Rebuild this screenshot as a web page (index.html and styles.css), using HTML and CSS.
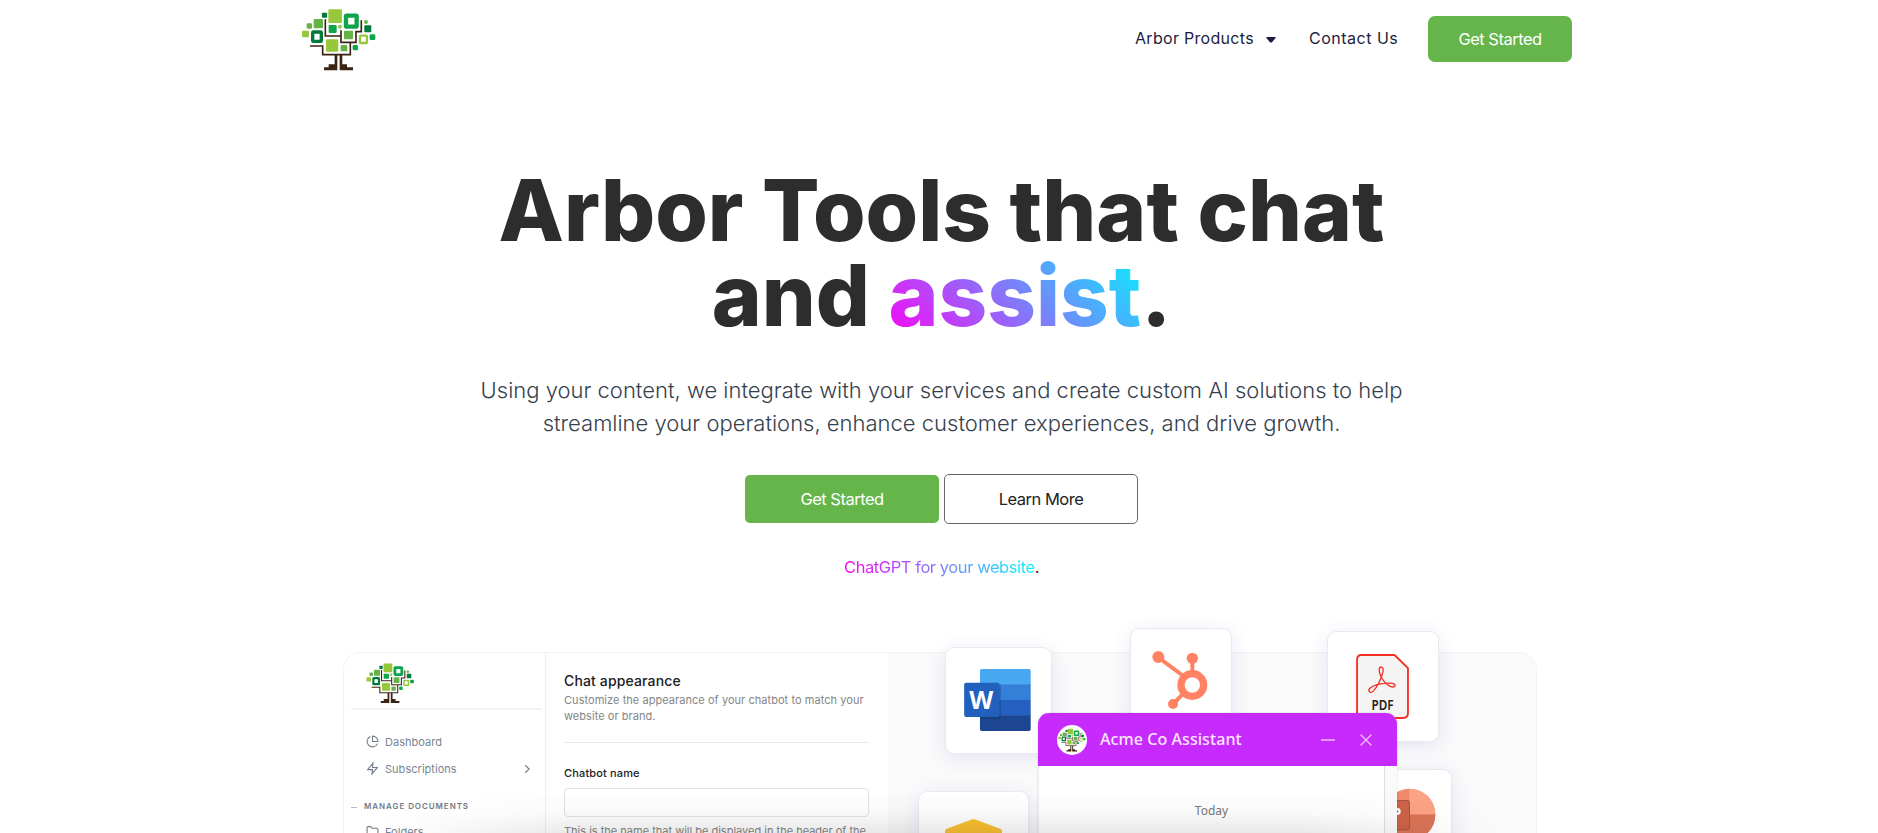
FILE: index.html
```html
<!DOCTYPE html>
<html lang="en">
<head>
<meta charset="utf-8">
<title>Arbor Tools</title>
<link rel="stylesheet" href="styles.css">
</head>
<body>
<svg class="defs" aria-hidden="true">
  <symbol id="tree" viewBox="30 20 235 195">
    <g fill="none" stroke="#3c2415" stroke-width="5">
      <path d="M106 57V107H151M153 90V126H198V94H214V60M60 137H98V163H181V126"/>
    </g>
    <path fill="#3c2415" d="M134 164h8v46h-40v-9h14v-9h18zM149 164h8v28h14v9h18v9h-40z"/>
    <g fill="#97c83c"><rect x="115" y="27" width="41" height="41" rx="4"/><rect x="108" y="117" width="37" height="37" rx="4"/><rect x="36" y="91" width="21" height="20" rx="3"/><circle cx="150" cy="79" r="6"/></g>
    <g fill="#65b346"><rect x="71" y="56" width="28" height="28" rx="3"/><rect x="162" y="91" width="27" height="26" rx="3"/><rect x="50" y="69" width="16" height="16" rx="3"/><rect x="152" y="134" width="20" height="19" rx="3"/><circle cx="228" cy="65" r="6"/></g>
    <g fill="#0da44c"><rect x="116" y="74" width="24" height="24" rx="3"/><rect x="239" y="102" width="17" height="17" rx="4"/><rect x="188" y="134" width="16" height="16" rx="4"/></g>
    <g fill="#007a3a"><rect x="96" y="37" width="15" height="15" rx="2"/><rect x="223" y="75" width="21" height="21" rx="3"/></g>
    <rect x="168" y="46" width="32" height="33" rx="2" fill="#fff" stroke="#0da44c" stroke-width="13"/>
    <rect x="68" y="95" width="26" height="28" rx="2" fill="#fff" stroke="#007a3a" stroke-width="10"/>
    <rect x="210" y="106" width="21" height="22" rx="2" fill="#fff" stroke="#97c83c" stroke-width="7"/>
  </symbol>
</svg>

<header class="header">
  <svg class="logo"><use href="#tree"/></svg>
  <nav class="nav">
    <a class="nav-products">Arbor Products</a>
    <svg class="caret" viewBox="0 0 10 6"><path d="M1 0h8q1.400 0 .6 1L6 5.300q-1 .9-2 0L.4 1Q-.4 0 1 0z" fill="#1c1d40"/></svg>
    <a class="nav-contact">Contact Us</a>
    <a class="btn btn-nav">Get Started</a>
  </nav>
</header>

<main class="hero">
  <h1>Arbor Tools that chat<br>and <span class="grad">assist</span>.</h1>
  <p class="lead">Using your content, we integrate with your services and create custom AI solutions to help<br>streamline your operations, enhance customer experiences, and drive growth.</p>
  <div class="actions">
    <a class="btn btn-main">Get Started</a>
    <a class="btn btn-outline">Learn More</a>
  </div>
  <p class="tagline"><span class="grad-flat">ChatGPT for your website</span>.</p>
</main>

<section class="preview">
  <aside class="sidebar">
    <div class="side-head"><svg class="side-logo"><use href="#tree"/></svg></div>
    <div class="item">
      <svg viewBox="0 0 24 24"><path d="M21.200 15.900A10 10 0 1 1 8 2.800M22 12A10 10 0 0 0 12 2v10z"/></svg>
      <span>Dashboard</span>
    </div>
    <div class="item">
      <svg viewBox="0 0 24 24"><path d="M13 2L3 14h9l-1 8 10-12h-9z"/></svg>
      <span>Subscriptions</span>
      <svg class="chev" viewBox="0 0 24 24"><path d="M8 21l9-9-9-9"/></svg>
    </div>
    <div class="group"><i></i><span>MANAGE DOCUMENTS</span></div>
    <div class="item folders">
      <svg viewBox="0 0 24 24"><path d="M22 19a2 2 0 0 1-2 2H4a2 2 0 0 1-2-2V5a2 2 0 0 1 2-2h5l2 3h9a2 2 0 0 1 2 2z"/></svg>
      <span>Folders</span>
    </div>
  </aside>
  <div class="settings">
    <h2>Chat appearance</h2>
    <p class="desc">Customize the appearance of your chatbot to match your<br>website or brand.</p>
    <hr>
    <h3>Chatbot name</h3>
    <div class="field"></div>
    <p class="help">This is the name that will be displayed in the header of the</p>
  </div>
  <div class="stage">
    <div class="tile word">
      <svg viewBox="0 0 200 186">
        <clipPath id="wc"><rect x="47" width="153" height="186" rx="6"/></clipPath>
        <g clip-path="url(#wc)"><path fill="#48a8f1" d="M47 0h153v47H47z"/><path fill="#3480d8" d="M47 46h153v47H47z"/><path fill="#245fc2" d="M47 93h153v47H47z"/><path fill="#1c4592" d="M47 139h153v47H47z"/><rect x="20" y="45" width="90" height="104" rx="6" fill="#123" opacity=".25"/></g>
        <rect y="41" width="106" height="103" rx="6" fill="#2160bd"/>
        <text x="51" y="119" text-anchor="middle" textLength="72" lengthAdjust="spacingAndGlyphs" class="w-letter">W</text>
      </svg>
    </div>
    <div class="tile hub">
      <svg viewBox="0 0 168 176">
        <g stroke="#ff8362" fill="none"><circle cx="121" cy="102" r="34" stroke-width="22"/><path stroke-width="12" d="M20 20l74 55M121 24v42M64 159l30-32"/></g>
        <g fill="#ff8362"><circle cx="19" cy="18" r="18"/><circle cx="121" cy="22" r="17"/><circle cx="63" cy="159" r="15"/></g>
      </svg>
    </div>
    <div class="tile pdf">
      <svg viewBox="0 0 158 194">
        <path d="M16 3h99l40 39v134q0 15-15 15H16Q3 191 3 176V18Q3 3 16 3z" fill="#f4f4f5" stroke="#f52f22" stroke-width="5.500"/>
        <path d="M76 39c-10-2-8 18 0 32 10 17 26 30 36 27 10-4 4-12-18-11-20 1-41 6-51 14-10 9-1 20 9 9C64 98 76 72 80 55q3-15-4-16z" fill="none" stroke="#f52f22" stroke-width="4"/>
        <text x="79" y="166" text-anchor="middle" textLength="66" lengthAdjust="spacingAndGlyphs" class="pdf-text">PDF</text>
      </svg>
    </div>
    <div class="tile yellow"><svg viewBox="0 0 172 60"><path d="M0 60V36q0-4 4-6L78 2q8-4 16 0l74 28q4 2 4 6v24z" fill="#fbc132"/></svg></div>
    <div class="tile ppt">
      <svg viewBox="0 0 160 160"><circle cx="80" cy="80" r="78" fill="#ef8a6c"/><path fill="#fca385" d="M80 2a78 78 0 0 1 78 78H80z"/><path fill="#d97457" d="M158 80a78 78 0 0 1-156 0z"/><rect x="-10" y="38" width="90" height="88" rx="6" fill="#cd6447" stroke="#9f5442" stroke-width="3"/><circle cx="43" cy="71" r="7" fill="none" stroke="#fff" stroke-width="7"/></svg>
    </div>
    <div class="chat">
      <div class="chat-head">
        <span class="avatar"><svg><use href="#tree"/></svg></span>
        <span class="chat-title">Acme Co Assistant</span>
        <svg class="min" viewBox="0 0 14 14"><path d="M0 7h14"/></svg>
        <svg class="close" viewBox="0 0 14 14"><path d="M1.500 1.500l11 11M12.500 1.500l-11 11"/></svg>
      </div>
      <div class="chat-body"><div class="messages"><span>Today</span></div><div class="scroll"></div></div>
    </div>
  </div>
  <div class="fade"></div>
</section>
</body>
</html>
```
FILE: styles.css
```css
* { box-sizing: border-box; }
html { overflow: hidden; }
body { position: relative; margin: 0; height: 833px; overflow: hidden; background: #fff; font-family: Inter, sans-serif; color: #2d2d2d; }
h1, h2, h3, p { margin: 0; }
.defs { position: absolute; width: 0; height: 0; }
.header { height: 78px; padding: 0 306px 0 300px; display: flex; justify-content: space-between; }
.logo { width: 78.300px; height: 65px; margin-top: 6.700px; }
.nav { display: flex; align-items: center; height: 78px; color: #1c1d40; font-size: 16px; white-space: nowrap; }
.nav-products { width: 118px; letter-spacing: .3px; margin-top: -2px; }
.caret { width: 10px; height: 6px; margin: 1px 33px 0 13px; }
.nav-contact { width: 89px; margin: -2px 30px 0 0; letter-spacing: .5px; }
.btn { display: flex; align-items: center; justify-content: center; font-size: 16.500px; letter-spacing: -.5px; white-space: nowrap; }
.btn-nav { width: 144px; height: 46px; border-radius: 7px; background: #66b54a; color: #fff; }
.hero { display: flex; flex-direction: column; align-items: center; text-align: center; padding-left: 5px; }
h1 { margin-top: 90px; font-size: 85px; line-height: 85px; font-weight: 800; white-space: nowrap; }
.grad { background: linear-gradient(45deg, #ff00f5, #00f7ff); background-clip: text; color: transparent; }
.lead { margin-top: 36px; font-size: 22px; line-height: 33px; font-weight: 300; color: #36414e; white-space: nowrap; }
.actions { display: flex; align-items: center; gap: 5px; margin-top: 34px; height: 50px; }
.btn-main { width: 194px; height: 48px; border-radius: 5px; background: #66b54a; color: #fff; }
.btn-outline { width: 194px; height: 50px; border-radius: 5px; border: 1px solid #666; color: #222; }
.tagline { margin-top: 31px; font-size: 16.500px; line-height: 24px; letter-spacing: -.43px; }
.grad-flat { background: linear-gradient(90deg, #ff00f5, #00f7ff); background-clip: text; color: transparent; }

.preview { position: absolute; left: 343px; top: 652px; width: 1194px; height: 181px; display: flex; border: 1px solid #f3f3f3; border-bottom: 0; border-radius: 18px 18px 0 0; }
.sidebar { width: 202px; height: 180px; overflow: hidden; border-right: 1px solid #eee; padding-left: 7px; }
.side-head { width: 191px; height: 57px; border-bottom: 2px solid #f3f3f3; padding: 9px 0 0 14px; }
.side-logo { width: 51px; height: 42px; }
.item { height: 27px; display: flex; align-items: center; gap: 6px; padding-left: 15px; font-size: 11px; letter-spacing: .03px; color: #7a8491; }
.side-head + .item { margin-top: 18px; }
.item svg { width: 13px; height: 13px; fill: none; stroke: #6f7a87; stroke-width: 2; }
.item .chev { width: 10px; height: 10px; margin-left: auto; margin-right: 13px; stroke-width: 2.600; }
.group { display: flex; align-items: center; height: 15px; margin-top: 16px; font-size: 8px; font-weight: 600; color: #737c87; letter-spacing: .93px; }
.group i { width: 6px; height: 1px; background: #bbb; margin: 3px 7px 0 0; }
.folders { margin-top: 5px; }
.settings { width: 342px; height: 180px; padding: 19px 0 0 18px; color: #202124; white-space: nowrap; overflow: hidden; }
.settings h2 { font-size: 14px; line-height: 18px; font-weight: 500; letter-spacing: .14px; }
.desc { margin-top: 2px; font-size: 11px; line-height: 16px; letter-spacing: .05px; color: #858585; }
hr { width: 305px; height: 1px; border: 0; background: #e8e8e8; margin: 18px 0 22px; }
.settings h3 { font-size: 11px; line-height: 16px; font-weight: 500; letter-spacing: .15px; }
.field { width: 305px; height: 29px; margin-top: 7px; border: 1px solid #e2e2e2; border-radius: 4px; }
.help { margin-top: 6px; font-size: 11px; line-height: 16px; color: #858585; }
.stage { position: relative; flex: 1; height: 180px; background: #fafafb; border-radius: 0 17px 0 0; clip-path: inset(-60px 0 0 0); }
.tile { position: absolute; background: #fff; border: 1px solid #e9e9f0; border-radius: 9px; box-shadow: 0 4px 18px rgba(85, 85, 190, .14); }
.tile svg { position: absolute; }
.word { left: 57px; top: -6px; width: 107px; height: 107px; }
.word svg { left: 18px; top: 21px; width: 67px; height: 62px; }
.w-letter { font: 700 77px "Open Sans", sans-serif; fill: #fff; }
.hub { left: 242px; top: -25px; width: 102px; height: 107px; }
.hub svg { left: 21px; top: 22px; width: 56px; height: 58.700px; }
.pdf { left: 439px; top: -22px; width: 112px; height: 111px; }
.pdf svg { left: 28px; top: 22px; width: 53px; height: 65px; }
.pdf-text { font: 600 42px "Noto Sans", sans-serif; fill: #222; }
.yellow { left: 30px; top: 138px; width: 111px; height: 42px; border-bottom: 0; border-radius: 9px 9px 0 0; }
.yellow svg { left: 26px; top: 27px; width: 57px; height: 20px; overflow: hidden; }
.ppt { left: 454px; top: 116px; width: 110px; height: 109px; }
.ppt svg { left: 40px; top: 18px; width: 53px; height: 53px; }
.chat { position: absolute; left: 150px; top: 60px; width: 359px; height: 120px; background: #fff; border-radius: 11px 11px 0 0; box-shadow: 0 0 2px rgba(0, 0, 0, .2); overflow: hidden; }
.chat-head { height: 53px; background: #c72bfb; display: flex; align-items: center; padding: 0 24px 0 19px; }
.avatar { width: 30px; height: 30px; border-radius: 50%; background: #fff; display: flex; align-items: center; justify-content: center; }
.avatar svg { width: 30px; height: 24px; }
.chat-title { margin: -2px 0 0 13px; font: 500 16px "Noto Sans", sans-serif; letter-spacing: .07px; color: #fbe6ff; white-space: nowrap; }
.min, .close { width: 14px; height: 14px; stroke: #eebaff; stroke-width: 1.400; fill: none; }
.min { margin-left: auto; margin-right: 24px; }
.chat-body { display: flex; height: 67px; border-left: 1px solid #eee; }
.messages { width: 345px; display: flex; justify-content: center; padding-top: 36px; font: 12px "Noto Sans", sans-serif; color: #777; }
.scroll { flex: 1; border-left: 1px solid #ddd; background: #fafafa; }
.fade { position: absolute; left: 0; right: 0; bottom: 0; height: 40px; background: linear-gradient(to bottom, transparent, rgba(0, 0, 0, .025) 50%, rgba(0, 0, 0, .09)); mask-image: linear-gradient(90deg, transparent 3%, #000 20%, #000 80%, transparent 97%); }
```
